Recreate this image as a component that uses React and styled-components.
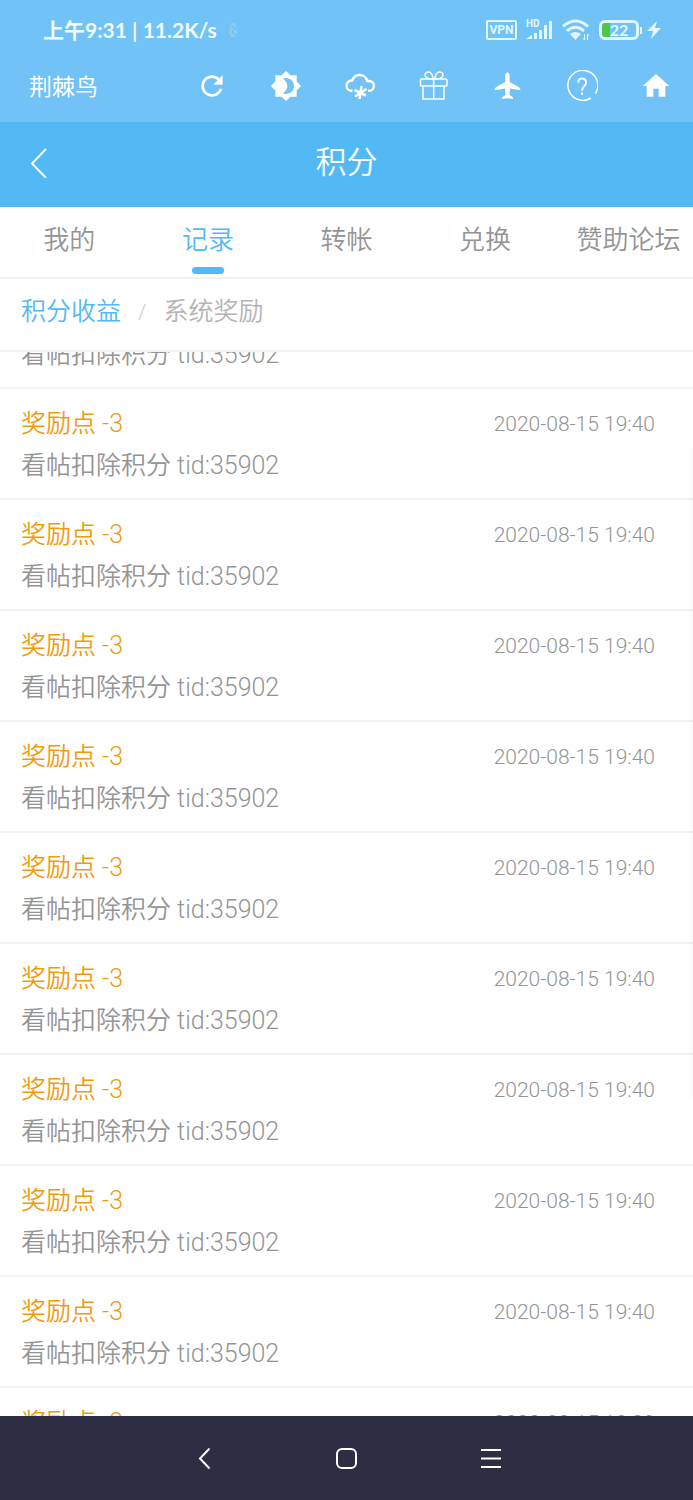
import React, { useLayoutEffect, useRef } from "react";
import styled, { createGlobalStyle } from "styled-components";

const cjk = '"Noto Sans CJK SC", sans-serif';
const blue = "#53b9f4";
const line = "#f1f1f1";

const GlobalStyle = createGlobalStyle`
  * { box-sizing: border-box; }
  body {
    margin: 0;
    background: #fff;
    font-family: Roboto, ${cjk};
    font-weight: 350;
  }
  h1, p, ul { margin: 0; padding: 0; }
`;

const Screen = styled.div`
  display: flex;
  flex-direction: column;
  height: 100vh;
`;

const Top = styled.div`
  background: #71c2f6;
  color: #fff;
`;

const StatusBar = styled.div`
  display: flex;
  align-items: center;
  justify-content: space-between;
  height: 60px;
  padding: 0 32px 0 43px;
`;

const StatusText = styled.div`
  display: flex;
  align-items: center;
  gap: 10px;
  font: 700 21px/28px Lato, ${cjk};
  color: #f1fbff;
`;

const StatusIcons = styled.div`
  display: flex;
  align-items: center;
  gap: 9px;
  color: #e2f6fd;
`;

const Vpn = styled.span`
  width: 31px;
  border: 2px solid currentColor;
  border-radius: 2px;
  font: 700 12px/16px Roboto, sans-serif;
  text-align: center;
`;

const Charge = styled.span`
  display: flex;
  align-items: center;
  gap: 5px;
`;

const Battery = styled.span`
  width: 40px;
  height: 20px;
  border: 3px solid currentColor;
  border-radius: 6px;
  background: linear-gradient(90deg, #4fc648 8px, transparent 8px);
  font: 700 16px/13px Lato, sans-serif;
  text-align: center;
`;

const BatteryTip = styled.span`
  width: 2px;
  height: 7px;
  margin-left: -4px;
  background: currentColor;
`;

const Toolbar = styled.div`
  display: flex;
  align-items: center;
  justify-content: space-between;
  height: 62px;
  padding: 0 21px 10px 29px;
`;

const SiteName = styled.span`
  padding-bottom: 2px;
  font: 400 23px/32px ${cjk};
`;

const Tools = styled.div`
  display: flex;
  gap: 42px;
`;

const IconButton = styled.button`
  display: flex;
  align-items: center;
  justify-content: center;
  width: 32px;
  height: 32px;
  padding: 0;
  border: 0;
  background: none;
  color: #fff;
`;

const Header = styled.header`
  display: grid;
  grid-template-columns: 32px 1fr 32px;
  align-items: center;
  height: 85px;
  padding: 0 22px 6px;
  background: ${blue};
  color: #fff;
`;

const Title = styled.h1`
  padding-bottom: 4px;
  font: 350 31px/40px ${cjk};
  text-align: center;
`;

const Tabs = styled.nav`
  display: grid;
  grid-template-columns: repeat(5, minmax(0, 1fr));
  height: 72px;
  flex: none;
  border-bottom: 2px solid ${line};
`;

const Tab = styled.a`
  position: relative;
  padding: 15px 22px 0;
  font: 350 26px/36px Roboto, ${cjk};
  text-align: center;
  text-decoration: none;
  white-space: nowrap;
  color: ${(p) => (p.$active ? blue : "#949494")};

  &::after {
    content: "";
    display: ${(p) => (p.$active ? "block" : "none")};
    position: absolute;
    bottom: 3px;
    left: calc(50% - 16px);
    width: 32px;
    height: 7px;
    border-radius: 4px;
    background: ${blue};
  }
`;

const SubTabs = styled.nav`
  display: flex;
  align-items: center;
  flex: none;
  gap: 17px;
  height: 73px;
  padding: 0 21px 6px;
  border-bottom: 2px solid ${line};
  font-size: 25px;
  line-height: 36px;
`;

const SubTab = styled.a`
  color: ${(p) => (p.$active ? blue : "#b4b4b4")};
  text-decoration: none;
`;

const Slash = styled.span`
  color: #ccc;
  font-size: 21px;
`;

const ListArea = styled.main`
  position: relative;
  flex: 1;
  min-height: 0;
`;

const List = styled.ul`
  height: 100%;
  overflow-y: auto;
  scrollbar-width: none;
  list-style: none;
`;

const ScrollThumb = styled.span`
  position: absolute;
  top: 9%;
  right: 0;
  width: 3px;
  height: 61%;
  background: rgba(0, 0, 0, 0.015);
`;

const Record = styled.li`
  height: 111px;
  padding: 14px 38px 0 21px;
  border-bottom: 2px solid ${line};
  color: #949494;
`;

const RecordHead = styled.div`
  display: flex;
  justify-content: space-between;
  height: 42px;
`;

const Points = styled.strong`
  font-weight: 350;
  font-size: 25px;
  line-height: 42px;
  color: #f09a0c;
`;

const Time = styled.time`
  font-size: 21px;
  line-height: 42px;
`;

const Note = styled.p`
  font-size: 25px;
  line-height: 42px;
`;

const SystemNav = styled.nav`
  display: flex;
  flex: none;
  align-items: center;
  justify-content: center;
  gap: 112px;
  height: 84px;
  background: #2d2e43;
`;

function Icon({ children, size = 32, line: stroke = 0 }) {
  return (
    <svg
      width={size}
      height={size}
      viewBox="0 0 32 32"
      fill={stroke ? "none" : "currentColor"}
      stroke={stroke ? "currentColor" : "none"}
      strokeWidth={stroke}
      aria-hidden="true"
    >
      {children}
    </svg>
  );
}

function Glyph({ d }) {
  return (
    <svg width="32" height="32" viewBox="0 0 24 24" fill="currentColor" aria-hidden="true">
      <path d={d} />
    </svg>
  );
}

const refresh =
  "M17.65 6.35C16.2 4.9 14.21 4 12 4c-4.42 0-7.99 3.58-7.99 8s3.57 8 7.99 8c3.73 0 6.84-2.55 7.73-6h-2.08c-.82 2.33-3.04 4-5.65 4-3.31 0-6-2.69-6-6s2.69-6 6-6c1.66 0 3.14.69 4.22 1.78L13 11h7V4l-2.35 2.35z";
const brightness =
  "M20 15.31L23.31 12 20 8.69V4h-4.69L12 .69 8.69 4H4v4.69L.69 12 4 15.31V20h4.69L12 23.31 15.31 20H20v-4.69zM12 18c-.89 0-1.74-.2-2.5-.55C11.56 16.5 13 14.42 13 12s-1.44-4.5-3.5-5.45C10.26 6.2 11.11 6 12 6c3.31 0 6 2.69 6 6s-2.69 6-6 6z";
const home = "M10 20v-6h4v6h5v-8h3L12 3 2 12h3v8z";

const records = Array.from({ length: 12 }, (_, i) => ({
  id: i,
  time: i < 10 ? "2020-08-15 19:40" : "2020-08-15 19:39",
}));

export default function App() {
  const list = useRef(null);

  useLayoutEffect(() => {
    list.current.scrollTop = 74;
  }, []);

  return (
    <Screen>
      <GlobalStyle />
      <Top>
        <StatusBar>
          <StatusText>
            <span>上午9:31 | 11.2K/s</span>
            <svg width="12" height="16" viewBox="0 0 12 16" aria-hidden="true">
              <path d="M3 7C3 2 4 1 6 1s3 1 3 6l2 4-2 1-1 3H4l-1-3-2-1z" fill="#8bccf4" />
              <path d="M4 4l4 2-3 4 3 3" fill="none" stroke="#69b7e8" />
            </svg>
          </StatusText>
          <StatusIcons>
            <Vpn>VPN</Vpn>
            <svg width="27" height="24" viewBox="0 0 27 24" fill="currentColor" aria-hidden="true">
              <text x="0" y="9" fontFamily="Roboto, sans-serif" fontSize="10" fontWeight="700">HD</text>
              <path d="M0 21l6-4v4zM8 15h3v6H8zM13 12h3v9h-3zM18 7h3v14h-3zM23 3h3v18h-3z" />
            </svg>
            <svg width="28" height="22" viewBox="0 0 28 22" fill="none" stroke="currentColor" strokeWidth="3" aria-hidden="true">
              <path d="M1 7.500Q13.500-3.500 26 7.500M5 12Q13.500 4.500 22 12" />
              <path d="M8 15q5.500-4 11 0l-5.500 6z" fill="currentColor" stroke="none" />
              <path d="M22.500 15v6l-2-2M25.500 21v-6l2 2" strokeWidth="1" />
            </svg>
            <Charge>
              <Battery>22</Battery>
              <BatteryTip />
              <svg width="14" height="18" viewBox="0 0 14 18" fill="currentColor" aria-hidden="true">
                <path d="M10 0L0 10h6L4 18 14 7H8z" />
              </svg>
            </Charge>
          </StatusIcons>
        </StatusBar>
        <Toolbar>
          <SiteName>荆棘鸟</SiteName>
          <Tools>
            <IconButton aria-label="刷新"><Glyph d={refresh} /></IconButton>
            <IconButton aria-label="夜间模式"><Glyph d={brightness} /></IconButton>
            <IconButton aria-label="天气">
              <Icon line={2.4}>
                <path d="M8.500 20.800H7A5.200 5.200 0 0 1 7 10.500H8.300A7.800 7.800 0 0 1 23.300 11H25A4.900 4.900 0 0 1 25 20.800H24" />
                <path d="M17.500 16l-2 13M10.500 20l11.500 5.500M22.500 19l-11.500 7.500" strokeWidth="2.500" />
              </Icon>
            </IconButton>
            <IconButton aria-label="礼物">
              <Icon line={1.5}>
                <rect x="2.500" y="9" width="26.500" height="7" rx="1" />
                <path d="M5 16V29H26V16M15.700 9V29" />
                <path d="M15 9C9 9 6.500 7 7 4.500S12 .5 14 4.500C15 6.500 15 7.500 15 9M17 9C23 9 25.500 7 25 4.500S20 .5 18 4.500C17 6.500 17 7.500 17 9" />
              </Icon>
            </IconButton>
            <IconButton aria-label="飞行">
              <Icon>
                <path d="M15.500 2.500c1.500 0 2.200 1.500 2.200 3.500v6l9 5c1.300.8 1.700 1.700 1.700 3.200L18 18.500L17.500 25l2.500 1.500c.8.500 1 1 1 2.500L15.500 28.200 10 29c0-1.500.2-2 1-2.500L13.500 25 13 18.500 2.600 20.200c0-1.500.4-2.400 1.700-3.200l9-5V6c0-2 .7-3.500 2.200-3.500z" />
              </Icon>
            </IconButton>
            <IconButton aria-label="帮助">
              <Icon line={1.5}>
                <path d="M25 28A15 15 0 1 1 29.500 23.500" />
                <path d="M12.300 12.500C12.300 9.800 13.500 8.500 16 8.500s4 1.500 4 4c0 4-4 4-4 8.200" strokeWidth="1.800" />
                <path d="M16 22.500v2.200" strokeWidth="2" />
              </Icon>
            </IconButton>
            <IconButton aria-label="主页"><Glyph d={home} /></IconButton>
          </Tools>
        </Toolbar>
      </Top>

      <Header>
        <IconButton aria-label="返回">
          <Icon line={1.8}><path d="M24 3L10 17.500 24 32" /></Icon>
        </IconButton>
        <Title>积分</Title>
      </Header>

      <Tabs>
        <Tab href="#mine">我的</Tab>
        <Tab href="#records" $active>记录</Tab>
        <Tab href="#transfer">转帐</Tab>
        <Tab href="#exchange">兑换</Tab>
        <Tab href="#sponsor">赞助论坛</Tab>
      </Tabs>

      <SubTabs>
        <SubTab href="#income" $active>积分收益</SubTab>
        <Slash>/</Slash>
        <SubTab href="#rewards">系统奖励</SubTab>
      </SubTabs>

      <ListArea>
        <List ref={list}>
          {records.map((r) => (
            <Record key={r.id}>
              <RecordHead>
                <Points>奖励点 -3</Points>
                <Time>{r.time}</Time>
              </RecordHead>
              <Note>看帖扣除积分 tid:35902</Note>
            </Record>
          ))}
        </List>
        <ScrollThumb />
      </ListArea>

      <SystemNav>
        <IconButton aria-label="后退">
          <Icon line={2}><path d="M22.500 6.500L13 16.500l9.500 10" /></Icon>
        </IconButton>
        <IconButton aria-label="桌面">
          <Icon line={2}><rect x="6" y="7" width="19" height="19" rx="5" /></Icon>
        </IconButton>
        <IconButton aria-label="菜单">
          <Icon line={2}><path d="M6 8h20M6 16.500h20M6 25h20" /></Icon>
        </IconButton>
      </SystemNav>
    </Screen>
  );
}
